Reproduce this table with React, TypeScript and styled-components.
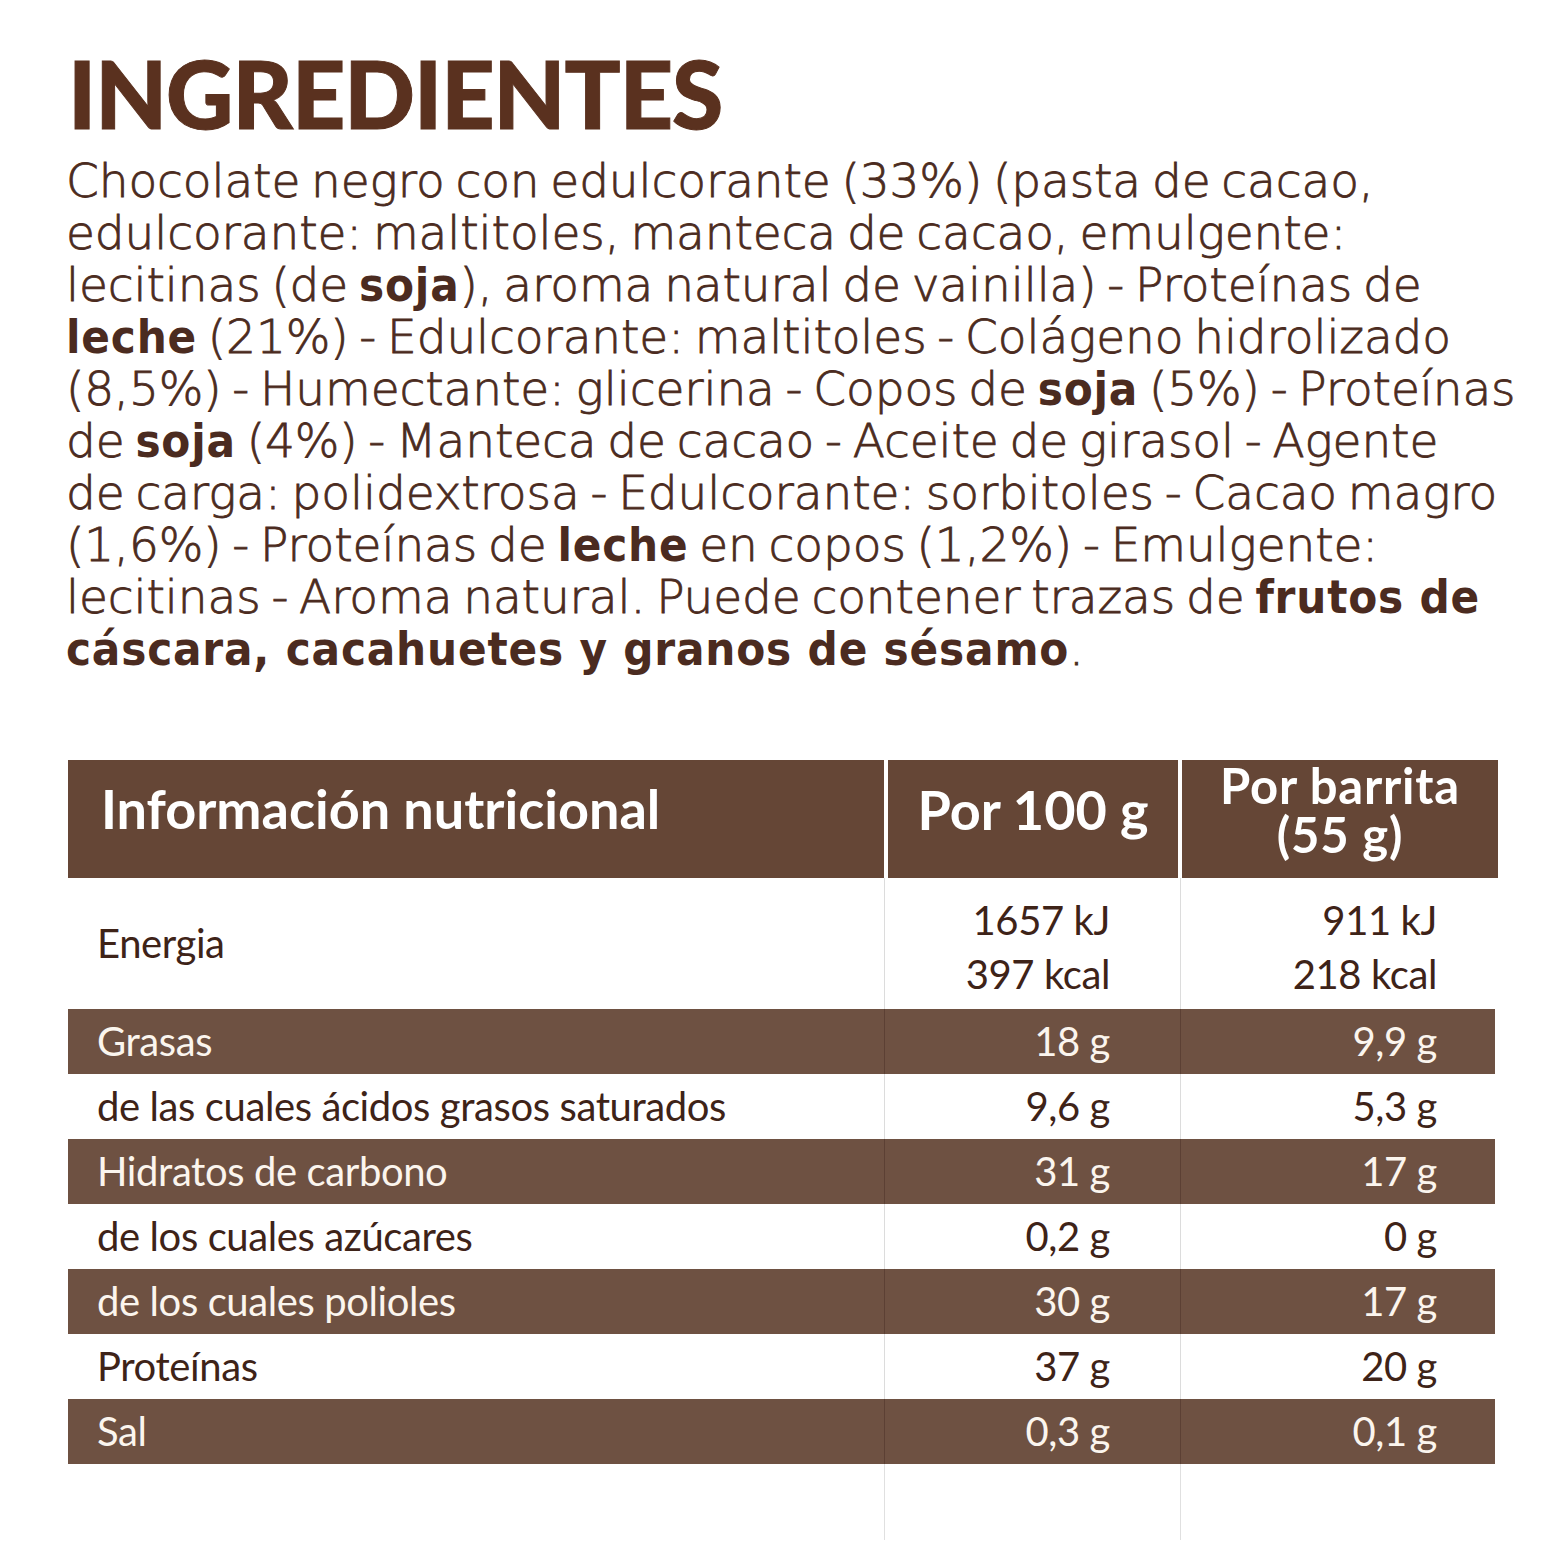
import React from "react";
import styled, { createGlobalStyle } from "styled-components";

const GlobalStyle = createGlobalStyle`
  html, body { margin: 0; padding: 0; background: #ffffff; }
  * { box-sizing: border-box; }
`;

const BROWN_TITLE = "#5a311f";
const BROWN_TEXT = "#4b2b20";
const HEADER_BG = "#654636";
const ROW_BG = "#6e5142";

const Page = styled.div`
  width: 1568px;
  min-height: 1568px;
  padding: 47px 0 0 68px;
  background: #ffffff;
`;

const Title = styled.h1`
  margin: 0;
  font-family: Lato, "Liberation Sans", sans-serif;
  font-weight: 900;
  font-size: 93px;
  line-height: 93px;
  letter-spacing: -1px;
  color: ${BROWN_TITLE};
  -webkit-text-stroke: 1px ${BROWN_TITLE};
`;

const Ingredients = styled.p`
  margin: 15px 0 0 -2px;
  font-family: "DejaVu Sans", sans-serif;
  font-weight: 200;
  font-size: 47px;
  line-height: 52px;
  word-spacing: -4px;
  letter-spacing: -0.1px;
  color: ${BROWN_TEXT};
  white-space: nowrap;
  -webkit-text-stroke: 0.8px ${BROWN_TEXT};
`;

const Allergen = styled.b`
  font-family: "DejaVu Sans", sans-serif;
  font-weight: 700;
  font-stretch: condensed;
  letter-spacing: 0.8px;
  word-spacing: 0;
  -webkit-text-stroke: 0;
`;

const Table = styled.section`
  margin-top: 85px;
  width: 1430px;
  display: flex;
  flex-direction: column;
`;

const HeaderRow = styled.div`
  display: grid;
  grid-template-columns: 816px 290px 1fr;
  column-gap: 4px;
  height: 118px;
  background: #ffffff;
`;

const HeaderCell = styled.div<{ $align: "left" | "center" }>`
  background: ${HEADER_BG};
  color: #ffffff;
  display: flex;
  flex-direction: column;
  justify-content: center;
  align-items: ${(p) => (p.$align === "left" ? "flex-start" : "center")};
  text-align: ${(p) => p.$align};
  padding: ${(p) => (p.$align === "left" ? "0 0 20px 33px" : "0 0 18px 0")};
  font-family: Lato, "Liberation Sans", sans-serif;
  font-weight: 700;
  font-size: 54px;
  line-height: 54px;
`;

const HeaderSmall = styled.span`
  font-size: 49px;
  line-height: 49px;
  letter-spacing: 0.8px;
`;

const Row = styled.div<{ $dark?: boolean; $tall?: boolean }>`
  display: grid;
  grid-template-columns: 816px 296px 1fr;
  height: ${(p) => (p.$tall ? "131px" : "65px")};
  margin-right: ${(p) => (p.$dark ? "3px" : "0")};
  background: ${(p) => (p.$dark ? ROW_BG : "#ffffff")};
  color: ${(p) => (p.$dark ? "#fbf5ee" : "#3e2318")};
  font-family: Lato, "Liberation Sans", sans-serif;
  font-weight: 400;
  font-size: 40px;
  line-height: 54px;
  letter-spacing: -0.4px;
`;

const Label = styled.div`
  display: flex;
  align-items: center;
  padding-left: 29px;
  padding-bottom: 2px;
`;

const Value = styled.div<{ $dark?: boolean; $tall?: boolean; $pad: number }>`
  display: flex;
  flex-direction: column;
  justify-content: center;
  align-items: flex-end;
  text-align: right;
  padding-right: ${(p) => p.$pad}px;
  padding-top: ${(p) => (p.$tall ? "9px" : "0")};
  padding-bottom: 2px;
  border-left: 1px solid ${(p) => (p.$dark ? "rgba(60,35,25,0.35)" : "#dcdcdc")};
`;

const Tail = styled.div`
  display: grid;
  grid-template-columns: 816px 296px 1fr;
  height: 76px;
`;

const TailCell = styled.div<{ $line?: boolean }>`
  border-left: ${(p) => (p.$line ? "1px solid #e0e0e0" : "none")};
`;

type Nut = { label: string; a: string[]; b: string[]; dark?: boolean; tall?: boolean };

const rows: Nut[] = [
  { label: "Energia", a: ["1657 kJ", "397 kcal"], b: ["911 kJ", "218 kcal"], tall: true },
  { label: "Grasas", a: ["18 g"], b: ["9,9 g"], dark: true },
  { label: "de las cuales ácidos grasos saturados", a: ["9,6 g"], b: ["5,3 g"] },
  { label: "Hidratos de carbono", a: ["31 g"], b: ["17 g"], dark: true },
  { label: "de los cuales azúcares", a: ["0,2 g"], b: ["0 g"] },
  { label: "de los cuales polioles", a: ["30 g"], b: ["17 g"], dark: true },
  { label: "Proteínas", a: ["37 g"], b: ["20 g"] },
  { label: "Sal", a: ["0,3 g"], b: ["0,1 g"], dark: true },
];

export default function App() {
  return (
    <>
      <GlobalStyle />
      <Page>
        <Title>INGREDIENTES</Title>
        <Ingredients>
          Chocolate negro con edulcorante (33%) (pasta de cacao,
          <br />
          edulcorante: maltitoles, manteca de cacao, emulgente:
          <br />
          lecitinas (de <Allergen>soja</Allergen>), aroma natural de vainilla) - Proteínas de
          <br />
          <Allergen>leche</Allergen> (21%) - Edulcorante: maltitoles - Colágeno hidrolizado
          <br />
          (8,5%) - Humectante: glicerina - Copos de <Allergen>soja</Allergen> (5%) - Proteínas
          <br />
          de <Allergen>soja</Allergen> (4%) - Manteca de cacao - Aceite de girasol - Agente
          <br />
          de carga: polidextrosa - Edulcorante: sorbitoles - Cacao magro
          <br />
          (1,6%) - Proteínas de <Allergen>leche</Allergen> en copos (1,2%) - Emulgente:
          <br />
          lecitinas - Aroma natural. Puede contener trazas de <Allergen>frutos de</Allergen>
          <br />
          <Allergen>cáscara, cacahuetes y granos de sésamo</Allergen>.
        </Ingredients>

        <Table>
          <HeaderRow>
            <HeaderCell $align="left">Información nutricional</HeaderCell>
            <HeaderCell $align="center">Por 100 g</HeaderCell>
            <HeaderCell $align="center">
              <HeaderSmall>
                Por barrita
                <br />
                (55 g)
              </HeaderSmall>
            </HeaderCell>
          </HeaderRow>
          {rows.map((r) => (
            <Row key={r.label} $dark={r.dark} $tall={r.tall}>
              <Label>{r.label}</Label>
              <Value $dark={r.dark} $tall={r.tall} $pad={70}>
                {r.a.map((v) => (
                  <span key={v}>{v}</span>
                ))}
              </Value>
              <Value $dark={r.dark} $tall={r.tall} $pad={r.dark ? 58 : 61}>
                {r.b.map((v) => (
                  <span key={v}>{v}</span>
                ))}
              </Value>
            </Row>
          ))}
          <Tail>
            <TailCell />
            <TailCell $line />
            <TailCell $line />
          </Tail>
        </Table>
      </Page>
    </>
  );
}
